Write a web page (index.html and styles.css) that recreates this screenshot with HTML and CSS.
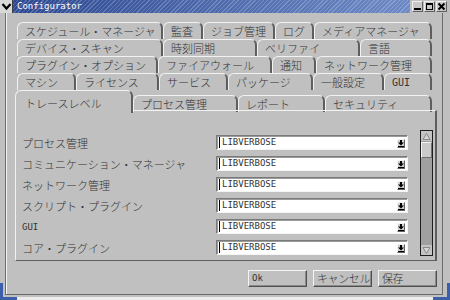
FILE: index.html
```html
<!DOCTYPE html>
<html lang="ja">
<head>
    <meta charset="UTF-8">
    <title>Configurator</title>
    <link rel="stylesheet" href="styles.css">
</head>
<body>
<div class="window">
    <div class="titlebar">
        <span class="menu-btn">
            <svg width="13" height="13" viewBox="0 0 13 13"><path d="M2.5 4 L6.5 8.5 L10.5 4" fill="none" stroke="#000" stroke-width="2.2"/></svg>
        </span>
        <span class="title">Configurator</span>
        <span class="wm-btns">
            <span class="wm-btn"><svg width="9" height="9" viewBox="0 0 9 9"><rect x="1" y="6" width="7" height="2" fill="#000"/></svg></span>
            <span class="wm-btn"><svg width="9" height="9" viewBox="0 0 9 9"><rect x="1.5" y="1.5" width="6" height="6" fill="none" stroke="#000"/><rect x="1" y="1" width="7" height="2" fill="#000"/></svg></span>
            <span class="wm-btn"><svg width="9" height="9" viewBox="0 0 9 9"><path d="M1.5 1.5 L7.5 7.5 M7.5 1.5 L1.5 7.5" stroke="#000" stroke-width="2"/></svg></span>
        </span>
    </div>

    <div class="client">
        <div class="tabs">
            <div class="tab-row row1">
                <span class="tab">スケジュール・マネージャ</span>
                <span class="tab">監査</span>
                <span class="tab">ジョブ管理</span>
                <span class="tab">ログ</span>
                <span class="tab">メディアマネージャ</span>
            </div>
            <div class="tab-row row2">
                <span class="tab">デバイス・スキャン</span>
                <span class="tab">時刻同期</span>
                <span class="tab">ベリファイ</span>
                <span class="tab">言語</span>
            </div>
            <div class="tab-row row3">
                <span class="tab">プラグイン・オプション</span>
                <span class="tab">ファイアウォール</span>
                <span class="tab">通知</span>
                <span class="tab">ネットワーク管理</span>
            </div>
            <div class="tab-row row4">
                <span class="tab">マシン</span>
                <span class="tab">ライセンス</span>
                <span class="tab">サービス</span>
                <span class="tab">パッケージ</span>
                <span class="tab">一般設定</span>
                <span class="tab latin">GUI</span>
            </div>
            <div class="tab-row row5">
                <span class="tab active">トレースレベル</span>
                <span class="tab">プロセス管理</span>
                <span class="tab">レポート</span>
                <span class="tab">セキュリティ</span>
            </div>
        </div>

        <div class="panel">
            <div class="fields">
                <label>プロセス管理</label>
                <div class="combo"><span class="combo-text">LIBVERBOSE</span><span class="combo-btn"><svg width="6" height="7" viewBox="0 0 6 7"><path d="M2 0 H4 V2.5 H6 L3 5.5 L0 2.5 H2 Z" fill="#000"/><rect x="0" y="6" width="6" height="1" fill="#000"/></svg></span></div>
                <label>コミュニケーション・マネージャ</label>
                <div class="combo"><span class="combo-text">LIBVERBOSE</span><span class="combo-btn"><svg width="6" height="7" viewBox="0 0 6 7"><path d="M2 0 H4 V2.5 H6 L3 5.5 L0 2.5 H2 Z" fill="#000"/><rect x="0" y="6" width="6" height="1" fill="#000"/></svg></span></div>
                <label>ネットワーク管理</label>
                <div class="combo"><span class="combo-text">LIBVERBOSE</span><span class="combo-btn"><svg width="6" height="7" viewBox="0 0 6 7"><path d="M2 0 H4 V2.5 H6 L3 5.5 L0 2.5 H2 Z" fill="#000"/><rect x="0" y="6" width="6" height="1" fill="#000"/></svg></span></div>
                <label>スクリプト・プラグイン</label>
                <div class="combo"><span class="combo-text">LIBVERBOSE</span><span class="combo-btn"><svg width="6" height="7" viewBox="0 0 6 7"><path d="M2 0 H4 V2.5 H6 L3 5.5 L0 2.5 H2 Z" fill="#000"/><rect x="0" y="6" width="6" height="1" fill="#000"/></svg></span></div>
                <label class="latin">GUI</label>
                <div class="combo"><span class="combo-text">LIBVERBOSE</span><span class="combo-btn"><svg width="6" height="7" viewBox="0 0 6 7"><path d="M2 0 H4 V2.5 H6 L3 5.5 L0 2.5 H2 Z" fill="#000"/><rect x="0" y="6" width="6" height="1" fill="#000"/></svg></span></div>
                <label>コア・プラグイン</label>
                <div class="combo"><span class="combo-text">LIBVERBOSE</span><span class="combo-btn"><svg width="6" height="7" viewBox="0 0 6 7"><path d="M2 0 H4 V2.5 H6 L3 5.5 L0 2.5 H2 Z" fill="#000"/><rect x="0" y="6" width="6" height="1" fill="#000"/></svg></span></div>
            </div>
            <div class="scrollbar">
                <span class="sb-arrow"><svg width="11" height="9" viewBox="0 0 11 9"><path d="M5.5 1.5 L9 7.5 H2 Z" fill="#d6d6d6" stroke="#888"/></svg></span>
                <span class="sb-thumb"></span>
                <span class="sb-arrow sb-down"><svg width="11" height="9" viewBox="0 0 11 9"><path d="M5.5 7.5 L9 1.5 H2 Z" fill="#d6d6d6" stroke="#888"/></svg></span>
            </div>
        </div>

        <div class="buttons">
            <button class="latin">Ok</button>
            <button>キャンセル</button>
            <button>保存</button>
        </div>
    </div>

    <span class="corner corner-bl"></span>
    <span class="corner corner-br"></span>
</div>
</body>
</html>
```

FILE: styles.css
```css
* {
    box-sizing: border-box;
}
body {
    margin: 0;
    background: #c0c0c0;
    font-family: "Noto Sans CJK JP", sans-serif;
    font-size: 11px;
    font-weight: 300;
    color: #333;
}
.latin {
    font-family: "DejaVu Sans Mono", monospace;
    font-size: 9px;
}
.window {
    position: relative;
    width: 450px;
    height: 300px;
    display: flex;
    flex-direction: column;
    overflow: hidden;
    box-shadow: inset 0 -3px #ececec;
}

/* title bar */
.titlebar {
    height: 13px;
    display: flex;
}
.menu-btn {
    width: 13px;
    background: #d8d8d8;
    border-right: 1px solid #404040;
}
.menu-btn svg {
    display: block;
}
.title {
    flex: 1;
    padding-left: 4px;
    color: #fff;
    font: 9px/13px "DejaVu Sans Mono", monospace;
    background:
        repeating-linear-gradient(135deg, rgba(255, 255, 255, 0.2) 0 1px, transparent 1px 3px),
        linear-gradient(to right, #2c4891, #6d8ac6);
}
.wm-btns {
    display: flex;
    gap: 1px;
    padding: 1px 3px 0 2px;
}
.wm-btn {
    width: 11px;
    height: 11px;
    display: flex;
    align-items: center;
    justify-content: center;
    background: #c8c8c8;
    border: 1px solid;
    border-color: #f0f0f0 #606060 #606060 #f0f0f0;
}

/* client area */
.client {
    flex: 1;
    margin: 0 7px 5px 5px;
    border: 1px solid #6c6c6c;
    border-top: none;
    box-shadow: inset 1px 0 #f4f4f4;
    display: flex;
    flex-direction: column;
}

/* tabs */
.tabs {
    padding: 9px 0 0 11px;
}
.tab-row {
    display: grid;
    height: 17px;
}
.row1 { grid-template-columns: 146px 40px 72px 39px 118px; }
.row2 { grid-template-columns: 146px 94px 103px 72px; }
.row3 { grid-template-columns: 141px 114px 44px 116px; }
.row4 { grid-template-columns: 59px 83px 69px 85px 71px 48px; }
.row5 {
    grid-template-columns: 118px 105px 87px 107px;
    height: 20px;
    margin-left: -2px;
    align-items: end;
}
.tab {
    height: 17px;
    padding: 1px 0 0 7px;
    line-height: 15px;
    white-space: nowrap;
    overflow: hidden;
    background: #c0c0c0;
    border-top: 1px solid #f2f2f2;
    border-left: 1px solid #f2f2f2;
    border-right: 2px solid #5e5e5e;
    border-radius: 6px 6px 0 0;
}
.tab.latin {
    font-size: 10px;
}
.tab.active {
    position: relative;
    z-index: 1;
    height: 23px;
    margin-bottom: -1px;
    padding: 5px 0 0 9px;
}

/* page panel */
.panel {
    height: 151px;
    margin: 0 5px 0 9px;
    padding: 19px 2px 0 6px;
    display: flex;
    align-items: flex-start;
    border: 1px solid;
    border-color: #f2f2f2 #5e5e5e #5e5e5e #f2f2f2;
    border-right-width: 2px;
}
.fields {
    display: grid;
    grid-template-columns: 194px 192px;
    grid-auto-rows: 21px;
    align-items: center;
    padding-top: 2px;
    margin-right: 12px;
}
.fields label {
    white-space: nowrap;
}
.combo {
    height: 15px;
    display: flex;
    align-items: center;
    background: #fff;
    border: 1px solid;
    border-color: #7a7a7a #f4f4f4 #f4f4f4 #7a7a7a;
    box-shadow: inset 1px 1px #9a9a9a;
}
.combo-text {
    flex: 1;
    margin-left: 2px;
    padding-left: 2px;
    border-left: 1px solid #000;
    font: 9px/11px "DejaVu Sans Mono", monospace;
    color: #333;
}
.combo-btn {
    width: 8px;
    height: 9px;
    margin: 2px 2px 0 0;
    display: flex;
    align-items: center;
    justify-content: center;
    background: #d0d0d0;
    border: 1px solid;
    border-color: #f4f4f4 #606060 #606060 #f4f4f4;
}

/* scrollbar */
.scrollbar {
    width: 13px;
    height: 126px;
    display: flex;
    flex-direction: column;
    background: #a0a0a0;
    border: 1px solid #1e1e1e;
}
.sb-arrow {
    height: 10px;
    display: flex;
    align-items: center;
    justify-content: center;
    background: #c4c4c4;
}
.sb-down {
    margin-top: auto;
}
.sb-thumb {
    height: 16px;
    margin-top: 1px;
    background: #cacaca;
    border: 1px solid;
    border-color: #f4f4f4 #707070 #707070 #f4f4f4;
}

/* dialog buttons */
.buttons {
    display: flex;
    justify-content: flex-end;
    gap: 6px;
    margin: 9px 5px 0 0;
}
.buttons button {
    width: 59px;
    height: 17px;
    padding: 0 2px 0 3px;
    text-align: left;
    white-space: nowrap;
    overflow: hidden;
    font-family: "Noto Sans CJK JP", sans-serif;
    font-size: 11px;
    font-weight: 300;
    letter-spacing: -0.4px;
    line-height: 13px;
    color: #333;
    background: #c0c0c0;
    border: 1px solid;
    border-color: #f4f4f4 #505050 #505050 #f4f4f4;
    box-shadow: inset -1px -1px #8a8a8a;
}
.buttons button.latin {
    font-family: "DejaVu Sans Mono", monospace;
    font-size: 9px;
    letter-spacing: 0;
}

/* window frame corners */
.corner {
    position: absolute;
    bottom: 0;
    width: 17px;
    height: 17px;
    border-bottom: 3px solid #3d5ea8;
}
.corner-bl {
    left: 0;
    border-left: 3px solid #3d5ea8;
}
.corner-br {
    right: 0;
    border-right: 3px solid #3d5ea8;
}
```
